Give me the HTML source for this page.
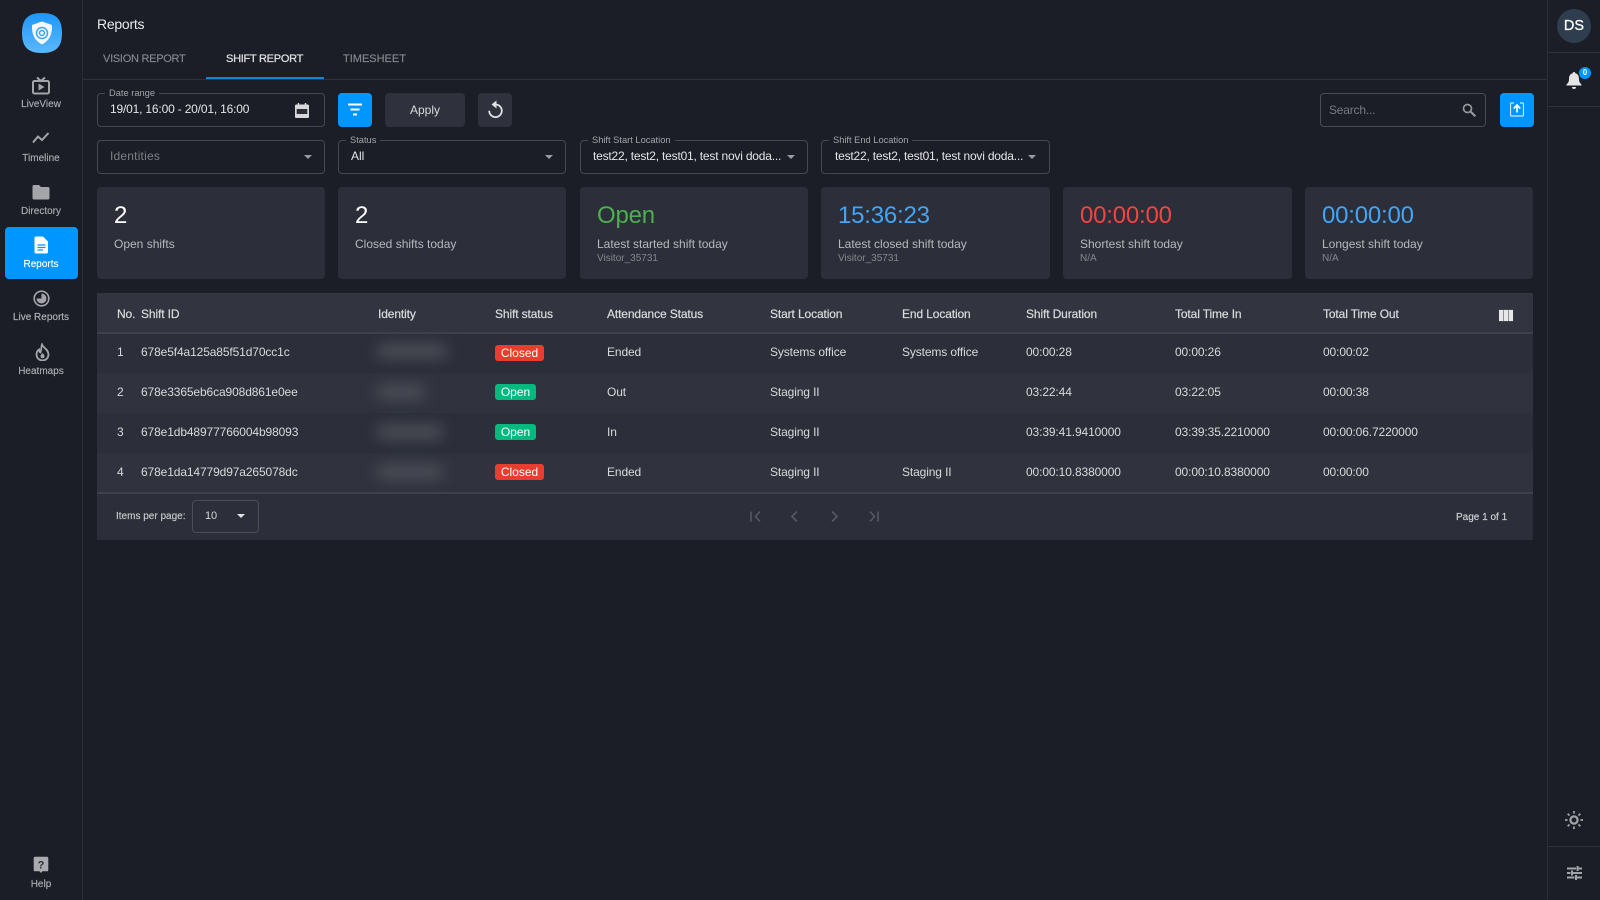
<!DOCTYPE html>
<html lang="en"><head><meta charset="utf-8"><title>Reports</title>
<style>
*{box-sizing:border-box}
html,body{margin:0;padding:0;width:1600px;height:900px;overflow:hidden;background:#1b1e27;font-family:"Liberation Sans",sans-serif;color:#d8d9dc}
.a{position:absolute}
.t{position:absolute;white-space:nowrap;line-height:16px;height:16px;font-size:12px;letter-spacing:-.12px}
.nav{position:absolute;left:0;width:82px;text-align:center;font-size:10px;line-height:12px;color:#a9abb0;-webkit-text-stroke:.15px #a9abb0}
.box{position:absolute;border:1px solid #454850;border-radius:4px;height:34px;background:#1b1e27}
.lbl{position:absolute;top:-7px;left:7px;padding:0 4px;background:#1b1e27;font-size:9.3px;line-height:12px;color:#a2a4a9;white-space:nowrap}
.val{position:absolute;left:12px;top:8px;font-size:12px;line-height:16px;color:#e4e5e7;white-space:nowrap}
.car{position:absolute;width:0;height:0;border-left:4.5px solid transparent;border-right:4.5px solid transparent;border-top:4.5px solid #9a9ca1}
.card{position:absolute;top:187px;height:92px;background:#2c2f39;border-radius:4px}
.big{position:absolute;left:17px;top:14px;font-size:24px;line-height:30px;white-space:nowrap;letter-spacing:-.2px}
.sub{position:absolute;left:17px;top:48.500px;font-size:12px;line-height:16px;color:#b6b8bc;white-space:nowrap}
.sm{position:absolute;left:17px;top:65px;font-size:10px;line-height:13px;color:#85878d;white-space:nowrap}
.th{font-weight:400;color:#dadbde;-webkit-text-stroke:.2px #dadbde}
.badge{position:absolute;left:495px;height:16px;border-radius:3px;color:#fff;font-size:12px;line-height:16px;text-align:center}
.red{width:49px;background:#ea3d2f}.grn{width:41px;background:#00b97f}
.blur{position:absolute;height:14px;background:#4c4e58;border-radius:7px;filter:blur(7px)}
</style></head><body>

<!-- frame -->
<div class="a" style="left:82px;top:0;width:1px;height:900px;background:#2a2d35"></div>
<div class="a" style="left:1547px;top:0;width:1px;height:900px;background:#2a2d35"></div>
<div class="a" style="left:83px;top:79px;width:1464px;height:1px;background:#2f323a"></div>
<div class="a" style="left:1548px;top:52px;width:52px;height:1px;background:#2f323a"></div>
<div class="a" style="left:1548px;top:106px;width:52px;height:1px;background:#2f323a"></div>
<div class="a" style="left:1548px;top:846px;width:52px;height:1px;background:#2f323a"></div>

<!-- logo -->
<svg class="a" style="left:21px;top:12px" width="42" height="42" viewBox="0 0 42 42">
<defs><linearGradient id="g" x1="0" y1="0" x2="0" y2="1"><stop offset="0" stop-color="#1e96fb"/><stop offset="1" stop-color="#5cb8fb"/></linearGradient></defs>
<path d="M21 1C35 1 41 7 41 21S35 41 21 41 1 35 1 21 7 1 21 1Z" fill="url(#g)"/>
<path d="M21 9.500 31 13c.5 9-2.500 15.500-10 19.500C13.500 28.500 10.500 22 11 13Z" fill="#f4f9fe"/>
<circle cx="21" cy="21" r="5.500" fill="none" stroke="#3da5f5" stroke-width="1.500"/><circle cx="21" cy="21" r="2.500" fill="none" stroke="#3da5f5" stroke-width="1.500"/>
</svg>

<!-- side nav -->
<svg class="a" style="left:31px;top:76px" width="20" height="19" viewBox="0 0 20 19" fill="none" stroke="#a3a5a9" stroke-width="2"><path d="M6 1.500 10 5l4-3.500"/><rect x="2" y="5" width="16" height="12.500" rx="1.500"/><path d="M7.500 7.500v7l6-3.500z" fill="#a3a5a9" stroke="none"/></svg>
<div class="nav" style="top:99px">LiveView</div>
<svg class="a" style="left:32px;top:131px" width="18" height="14" viewBox="0 0 18 14" fill="none" stroke="#a3a5a9" stroke-width="2"><path d="M1 11.500 6 5.500l4 3.500 6.500-7"/></svg>
<div class="nav" style="top:152.500px">Timeline</div>
<svg class="a" style="left:32px;top:184px" width="18" height="16" viewBox="0 0 18 16"><path d="M2 1h5l2 2h7a1.500 1.500 0 0 1 1.500 1.500V14a1.500 1.500 0 0 1-1.500 1.500H2A1.500 1.500 0 0 1 .5 14V2.500A1.500 1.500 0 0 1 2 1Z" fill="#a3a5a9"/></svg>
<div class="nav" style="top:206px">Directory</div>

<div class="a" style="left:5px;top:227px;width:73px;height:52px;background:#0096ff;border-radius:4px"></div>
<svg class="a" style="left:34px;top:236px" width="15" height="18" viewBox="0 0 15 18"><path d="M2 .5h7l5 5V16a1.500 1.500 0 0 1-1.500 1.500h-10.500A1.500 1.500 0 0 1 .5 16V2A1.500 1.500 0 0 1 2 .5Z" fill="#fff"/><path d="M3.500 9h8M3.500 11.500h8M3.500 14h5.500" stroke="#0096ff" stroke-width="1.200"/></svg>
<div class="nav" style="top:258.500px;color:#fff;-webkit-text-stroke:.15px #fff">Reports</div>

<svg class="a" style="left:33px;top:290px" width="17" height="17" viewBox="0 0 17 17"><circle cx="8.500" cy="8.500" r="7.300" fill="none" stroke="#a3a5a9" stroke-width="1.600"/><path d="M8.500 3.500a5 5 0 1 1-5 5h5z" fill="#a3a5a9"/></svg>
<div class="nav" style="top:312px;color:#b5b7bb">Live Reports</div>
<svg class="a" style="left:35px;top:343px" width="15" height="18" viewBox="0 0 15 18" fill="none" stroke="#a3a5a9" stroke-width="1.800"><path d="M7 1.500c1 3 6.500 5 6.500 10a6 6 0 0 1-12 0c0-2.500 1-4 2.500-5 0 1.500.5 2.500 1.500 3C6.500 7 6 4 7 1.500Z"/><path d="M7.500 10c1 1.200 2 1.800 2 3.300a2 2 0 0 1-4 0c0-1.300 1-2 2-3.300Z" fill="#a3a5a9" stroke="none"/></svg>
<div class="nav" style="top:365.500px">Heatmaps</div>
<svg class="a" style="left:33px;top:856px" width="16" height="18" viewBox="0 0 16 18"><path d="M2 .8h12A1.300 1.300 0 0 1 15.300 2v12a1.300 1.300 0 0 1-1.300 1.300H9.500L8 17l-1.500-1.700H2A1.300 1.300 0 0 1 .7 14V2A1.300 1.300 0 0 1 2 .8Z" fill="#a9abaf"/><text x="8" y="12.500" text-anchor="middle" font-size="11" font-weight="700" font-family="Liberation Sans" fill="#2b2e36">?</text></svg>
<div class="nav" style="top:878.500px">Help</div>

<!-- header + tabs -->
<div class="t" style="left:97px;top:16px;font-size:14px;line-height:16px;color:#e8e9ea;letter-spacing:-.25px">Reports</div>
<div class="t" style="left:103px;top:50.500px;font-size:11px;color:#85878d;letter-spacing:-.27px;-webkit-text-stroke:.15px #85878d">VISION REPORT</div>
<div class="t" style="left:226px;top:50.500px;font-size:11px;color:#dcdddf;letter-spacing:-.27px;-webkit-text-stroke:.3px #dcdddf">SHIFT REPORT</div>
<div class="t" style="left:343px;top:50.500px;font-size:11px;color:#85878d;letter-spacing:0;-webkit-text-stroke:.15px #85878d">TIMESHEET</div>
<div class="a" style="left:206px;top:77px;width:118px;height:2px;background:#0b87e4"></div>

<!-- filter row 1 -->
<div class="box" style="left:97px;top:93px;width:228px"><div class="lbl">Date range</div><div class="val" style="top:7px;left:12px;letter-spacing:-.18px">19/01, 16:00 - 20/01, 16:00</div>
<svg class="a" style="left:197px;top:9px" width="14" height="15" viewBox="0 0 14 15"><path d="M1.500 1.500h11A1.300 1.300 0 0 1 14 2.800v11A1.300 1.300 0 0 1 12.500 15h-11A1.300 1.300 0 0 1 0 13.800v-11A1.300 1.300 0 0 1 1.500 1.500Z" fill="#d7d8da"/><rect x="1.700" y="6" width="10.600" height="5" fill="#2a2d35"/><path d="M3.500 0v3M10.500 0v3" stroke="#d7d8da" stroke-width="1.500"/></svg></div>
<div class="a" style="left:338px;top:93px;width:34px;height:34px;background:#0096ff;border-radius:4px"></div>
<svg class="a" style="left:348px;top:103px" width="14" height="13" viewBox="0 0 14 13" stroke="#fff" stroke-width="2"><path d="M0 1.500h14M2.500 6.500h9M5 11.500h4"/></svg>
<div class="a" style="left:385px;top:93px;width:80px;height:34px;background:#2f323c;border-radius:4px;text-align:center;font-size:12px;line-height:34px;color:#d9dadc">Apply</div>
<div class="a" style="left:478px;top:93px;width:34px;height:34px;background:#2f323c;border-radius:4px"></div>
<svg class="a" style="left:487px;top:100px" width="16" height="19" viewBox="0 0 16 19"><path d="M8.500 4.500A6.300 6.300 0 1 1 2.200 10.800" fill="none" stroke="#e2e3e5" stroke-width="1.800"/><path d="M9.500 .5 4.500 4.500l5 4z" fill="#e2e3e5"/></svg>

<div class="box" style="left:1320px;top:93px;width:166px;border-color:#484b52"><div class="val" style="left:8px;color:#787a80;letter-spacing:-.2px">Search...</div>
<svg class="a" style="left:141px;top:9px" width="14" height="14" viewBox="0 0 14 14" fill="none" stroke="#96989d" stroke-width="1.700"><circle cx="5.500" cy="5.500" r="4"/><path d="m8.500 8.500 4.800 4.800" stroke-width="2.100"/></svg></div>
<div class="a" style="left:1500px;top:93px;width:34px;height:34px;background:#0096ff;border-radius:4px"></div>
<svg class="a" style="left:1510px;top:102px" width="14" height="15" viewBox="0 0 14 15" fill="none" stroke="#cfe8ff" stroke-width="1.200"><path d="M4 1H1.500a1 1 0 0 0-1 1v11a1 1 0 0 0 1 1h11a1 1 0 0 0 1-1V2a1 1 0 0 0-1-1H10"/><path d="M7 10.500V3.500M3.800 6.500 7 3l3.200 3.500" stroke="#fff" stroke-width="1.700"/></svg>

<!-- filter row 2 -->
<div class="box" style="left:97px;top:140px;width:228px"><div class="val" style="color:#7e8086;letter-spacing:.2px;top:7px">Identities</div><div class="car" style="left:206px;top:14px"></div></div>
<div class="box" style="left:338px;top:140px;width:228px"><div class="lbl">Status</div><div class="val" style="top:7px">All</div><div class="car" style="left:206px;top:14px"></div></div>
<div class="box" style="left:580px;top:140px;width:228px"><div class="lbl">Shift Start Location</div><div class="val" style="letter-spacing:-.2px;top:7px">test22, test2, test01, test novi doda...</div><div class="car" style="left:206px;top:14px"></div></div>
<div class="box" style="left:821px;top:140px;width:229px"><div class="lbl">Shift End Location</div><div class="val" style="left:13px;letter-spacing:-.2px;top:7px">test22, test2, test01, test novi doda...</div><div class="car" style="left:206px;top:14px"></div></div>

<!-- cards -->
<div class="card" style="left:97px;width:228px"><div class="big" style="color:#fff">2</div><div class="sub">Open shifts</div></div>
<div class="card" style="left:338px;width:228px"><div class="big" style="color:#fff">2</div><div class="sub">Closed shifts today</div></div>
<div class="card" style="left:580px;width:228px"><div class="big" style="color:#4caf50">Open</div><div class="sub">Latest started shift today</div><div class="sm">Visitor_35731</div></div>
<div class="card" style="left:821px;width:229px"><div class="big" style="color:#42a5f5">15:36:23</div><div class="sub">Latest closed shift today</div><div class="sm">Visitor_35731</div></div>
<div class="card" style="left:1063px;width:229px"><div class="big" style="color:#f44343">00:00:00</div><div class="sub">Shortest shift today</div><div class="sm">N/A</div></div>
<div class="card" style="left:1305px;width:228px"><div class="big" style="color:#42a5f5">00:00:00</div><div class="sub">Longest shift today</div><div class="sm">N/A</div></div>

<!-- table -->
<div class="a" style="left:97px;top:293px;width:1436px;height:247px;background:#2c2f39"></div>
<div class="a" style="left:97px;top:293px;width:1436px;height:40px;background:#32353f"></div>
<div class="a" style="left:97px;top:332px;width:1436px;height:2px;background:#3e414b"></div>
<div class="a" style="left:97px;top:373px;width:1436px;height:40px;background:#30333d"></div>
<div class="a" style="left:97px;top:453px;width:1436px;height:39px;background:#30333d"></div>
<div class="a" style="left:97px;top:492px;width:1436px;height:2px;background:#3e414b"></div>

<div class="t th" style="left:117px;top:306px">No.</div>
<div class="t th" style="left:141px;top:306px">Shift ID</div>
<div class="t th" style="left:378px;top:306px">Identity</div>
<div class="t th" style="left:495px;top:306px">Shift status</div>
<div class="t th" style="left:607px;top:306px">Attendance Status</div>
<div class="t th" style="left:770px;top:306px">Start Location</div>
<div class="t th" style="left:902px;top:306px">End Location</div>
<div class="t th" style="left:1026px;top:306px">Shift Duration</div>
<div class="t th" style="left:1175px;top:306px">Total Time In</div>
<div class="t th" style="left:1323px;top:306px">Total Time Out</div>
<svg class="a" style="left:1498px;top:309px" width="16" height="13" viewBox="0 0 16 13"><rect width="16" height="13" fill="#e6e7e9"/><path d="M5.500 1v11M10.500 1v11" stroke="#8e9097" stroke-width="1"/><path d="M.5.500h15v12H.5z" fill="none" stroke="#0f1116" stroke-width=".8"/></svg>

<!-- row 1 -->
<div class="t" style="left:117px;top:344px">1</div><div class="t" style="left:141px;top:344px">678e5f4a125a85f51d70cc1c</div>
<div class="blur" style="left:376px;top:344px;width:72px"></div>
<div class="badge red" style="top:345px">Closed</div>
<div class="t" style="left:607px;top:344px">Ended</div><div class="t" style="left:770px;top:344px">Systems office</div><div class="t" style="left:902px;top:344px">Systems office</div>
<div class="t" style="left:1026px;top:344px">00:00:28</div><div class="t" style="left:1175px;top:344px">00:00:26</div><div class="t" style="left:1323px;top:344px">00:00:02</div>
<!-- row 2 -->
<div class="t" style="left:117px;top:384px">2</div><div class="t" style="left:141px;top:384px">678e3365eb6ca908d861e0ee</div>
<div class="blur" style="left:376px;top:385px;width:50px"></div>
<div class="badge grn" style="top:384px">Open</div>
<div class="t" style="left:607px;top:384px">Out</div><div class="t" style="left:770px;top:384px">Staging II</div>
<div class="t" style="left:1026px;top:384px">03:22:44</div><div class="t" style="left:1175px;top:384px">03:22:05</div><div class="t" style="left:1323px;top:384px">00:00:38</div>
<!-- row 3 -->
<div class="t" style="left:117px;top:424px">3</div><div class="t" style="left:141px;top:424px">678e1db48977766004b98093</div>
<div class="blur" style="left:376px;top:425px;width:68px"></div>
<div class="badge grn" style="top:424px">Open</div>
<div class="t" style="left:607px;top:424px">In</div><div class="t" style="left:770px;top:424px">Staging II</div>
<div class="t" style="left:1026px;top:424px">03:39:41.9410000</div><div class="t" style="left:1175px;top:424px">03:39:35.2210000</div><div class="t" style="left:1323px;top:424px">00:00:06.7220000</div>
<!-- row 4 -->
<div class="t" style="left:117px;top:464px">4</div><div class="t" style="left:141px;top:464px">678e1da14779d97a265078dc</div>
<div class="blur" style="left:376px;top:465px;width:68px"></div>
<div class="badge red" style="top:464px">Closed</div>
<div class="t" style="left:607px;top:464px">Ended</div><div class="t" style="left:770px;top:464px">Staging II</div><div class="t" style="left:902px;top:464px">Staging II</div>
<div class="t" style="left:1026px;top:464px">00:00:10.8380000</div><div class="t" style="left:1175px;top:464px">00:00:10.8380000</div><div class="t" style="left:1323px;top:464px">00:00:00</div>

<!-- pagination -->
<div class="t" style="left:116px;top:508.500px;font-size:10px;color:#c8c9cc;letter-spacing:0;-webkit-text-stroke:.15px #c8c9cc">Items per page:</div>
<div class="a" style="left:192px;top:500px;width:67px;height:33px;border:1px solid #4a4d56;border-radius:4px"></div>
<div class="t" style="left:205px;top:507.500px;font-size:11px;color:#d5d6d8">10</div>
<div class="car" style="left:237px;top:514px;border-top-color:#e3e4e6"></div>
<svg class="a" style="left:749px;top:510px" width="130" height="13" viewBox="0 0 130 13" fill="none" stroke="#565963" stroke-width="1.600"><path d="M2 1.500v10M11 1.500 6.500 6.500l4.500 5"/><path d="M48 1.500 43 6.500l5 5"/><path d="M83 1.500l5 5-5 5"/><path d="M121 1.500l4.500 5-4.500 5M129 1.500v10"/></svg>
<div class="t" style="left:1456px;top:510px;font-size:10px;color:#d0d1d4;letter-spacing:0;-webkit-text-stroke:.15px #d0d1d4">Page 1 of 1</div>

<!-- right rail -->
<div class="a" style="left:1557px;top:9px;width:34px;height:34px;border-radius:50%;background:#2f3e4f;color:#fff;font-size:14.500px;line-height:34px;text-align:center;-webkit-text-stroke:.3px #fff">DS</div>
<svg class="a" style="left:1566px;top:71px" width="16" height="18" viewBox="0 0 16 18"><path d="M8 1a1.300 1.300 0 0 1 1.300 1.300c2.800.7 3.700 3 3.700 5.700 0 3 1 4 2.500 5.500v1H.5v-1C2 12 3 11 3 8c0-2.700.9-5 3.700-5.700A1.300 1.300 0 0 1 8 1Z" fill="#e3e4e6"/><path d="M6 16h4a2 2 0 0 1-4 0Z" fill="#e3e4e6"/></svg>
<div class="a" style="left:1579px;top:67px;width:12px;height:12px;border-radius:50%;background:#0096ff;color:#fff;font-size:8px;font-weight:700;line-height:12px;text-align:center">0</div>
<svg class="a" style="left:1564px;top:810px" width="20" height="20" viewBox="0 0 20 20" fill="none" stroke="#a2a4a8" stroke-width="1.800"><circle cx="10" cy="10" r="3.600" stroke-width="2.200"/><path d="M10 1v2.500M10 16.500V19M1 10h2.500M16.500 10H19M3.700 3.700l1.800 1.800M14.500 14.500l1.800 1.800M3.700 16.300l1.800-1.800M14.500 5.500l1.800-1.800"/></svg>
<svg class="a" style="left:1567px;top:866px" width="15" height="14" viewBox="0 0 15 14" fill="none" stroke="#a2a4a8" stroke-width="2"><path d="M0 2.500h9M11 2.500h4M10.500 0v5M0 7h3.500M6 7h9M5 4.500v5M0 11.500h7.500M10 11.500h5M9 9v5"/></svg>

</body></html>
